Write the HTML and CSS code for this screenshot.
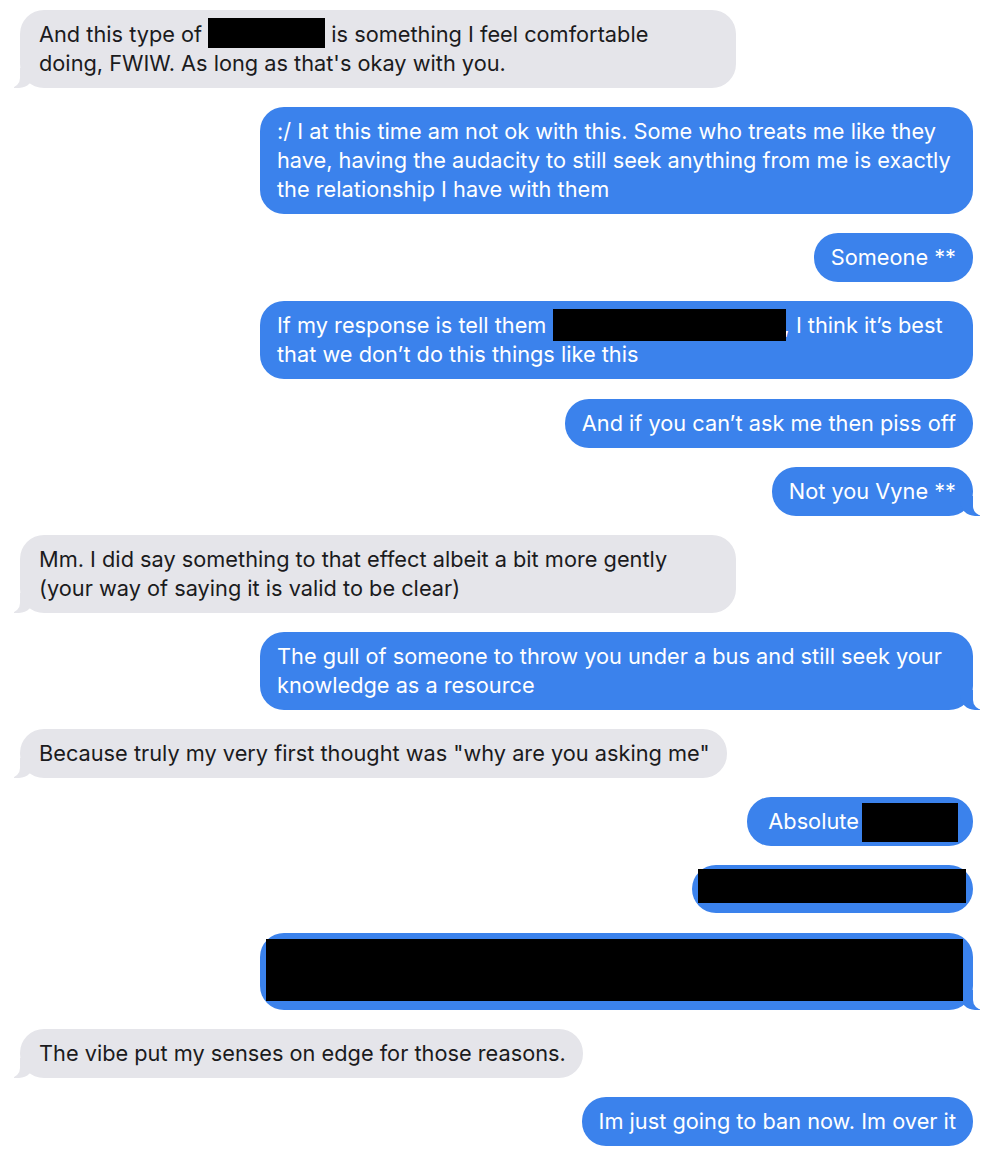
FILE: index.html
```html
<!DOCTYPE html>
<html lang="en">
<head>
<meta charset="utf-8">
<title>Messages</title>
<link rel="stylesheet" href="styles.css">
</head>
<body>
<main class="thread">
  <div class="msg them tail wide">And this type of <span class="redact r1"></span> is something I feel comfortable<br>doing, FWIW. As long as that's okay with you.</div>
  <div class="msg me wide">:/ I at this time am not ok with this. Some who treats me like they<br>have, having the audacity to still seek anything from me is exactly<br>the relationship I have with them</div>
  <div class="msg me">Someone **</div>
  <div class="msg me wide">If my response is tell them <span class="redact r4"></span>, I think it’s best<br>that we don’t do this things like this</div>
  <div class="msg me">And if you can’t ask me then piss off</div>
  <div class="msg me tail">Not you Vyne **</div>
  <div class="msg them tail wide">Mm. I did say something to that effect albeit a bit more gently<br>(your way of saying it is valid to be clear)</div>
  <div class="msg me tail wide">The gull of someone to throw you under a bus and still seek your<br>knowledge as a resource</div>
  <div class="msg them tail">Because truly my very first thought was "why are you asking me"</div>
  <div class="msg me abs">Absolute <span class="redact r10"></span></div>
  <div class="msg me block b11"><span class="redact r11"></span></div>
  <div class="msg me tail block b12"><span class="redact r12"></span></div>
  <div class="msg them tail">The vibe put my senses on edge for those reasons.</div>
  <div class="msg me">Im just going to ban now. Im over it</div>
</main>
</body>
</html>
```

FILE: styles.css
```css
html, body {
  margin: 0;
  background: #ffffff;
}

body {
  font-family: Inter, "Open Sans", "Liberation Sans", sans-serif;
  font-size: 21.75px;
  -webkit-font-smoothing: antialiased;
}

.thread {
  display: flex;
  flex-direction: column;
  gap: 19.15px;
  padding: 10px 27px 10px 20px;
}

.msg {
  position: relative;
  box-sizing: border-box;
  padding: 10px 17px;
  line-height: 29px;
  border-radius: 24px;
  white-space: nowrap;
  width: fit-content;
}

.them {
  align-self: flex-start;
  background: #e5e5ea;
  color: #1b1b1d;
  padding-left: 19px;
}

.them.wide {
  width: 716px;
}

.me {
  align-self: flex-end;
  background: #3b82ec;
  color: #ffffff;
}

.me.wide {
  width: 713px;
}

/* tails */
.them.tail::before {
  content: "";
  position: absolute;
  bottom: 0;
  left: -6px;
  width: 20px;
  height: 20px;
  background: #e5e5ea;
  border-bottom-right-radius: 15px;
}
.them.tail::after {
  content: "";
  position: absolute;
  bottom: 0;
  left: -10px;
  width: 10px;
  height: 20px;
  background: #ffffff;
  border-bottom-right-radius: 10px;
}
.me.tail::before {
  content: "";
  position: absolute;
  bottom: 0;
  right: -7px;
  width: 20px;
  height: 20px;
  background: #3b82ec;
  border-bottom-left-radius: 15px;
}
.me.tail::after {
  content: "";
  position: absolute;
  bottom: 0;
  right: -10px;
  width: 10px;
  height: 20px;
  background: #ffffff;
  border-bottom-left-radius: 10px;
}

.redact {
  display: inline-block;
  background: #000000;
  position: relative;
  z-index: 1;
  vertical-align: top;
}

.r1 {
  width: 117px;
  height: 30px;
  margin: -2px 0 1px 0;
}

.r4 {
  width: 233px;
  height: 32px;
  margin: -2px -2px -1px 0;
}

.abs {
  padding-left: 21px;
  padding-right: 15px;
}

.r10 {
  width: 96px;
  height: 39px;
  margin: -4px 0 -6px -3px;
}

.block {
  line-height: 0;
}

.b11 {
  padding: 4px 7px 10px 6px;
}

.r11 {
  width: 268px;
  height: 34px;
}

.b12 {
  padding: 6px 10px 9px 6px;
}

.r12 {
  width: 697px;
  height: 62px;
}
```
